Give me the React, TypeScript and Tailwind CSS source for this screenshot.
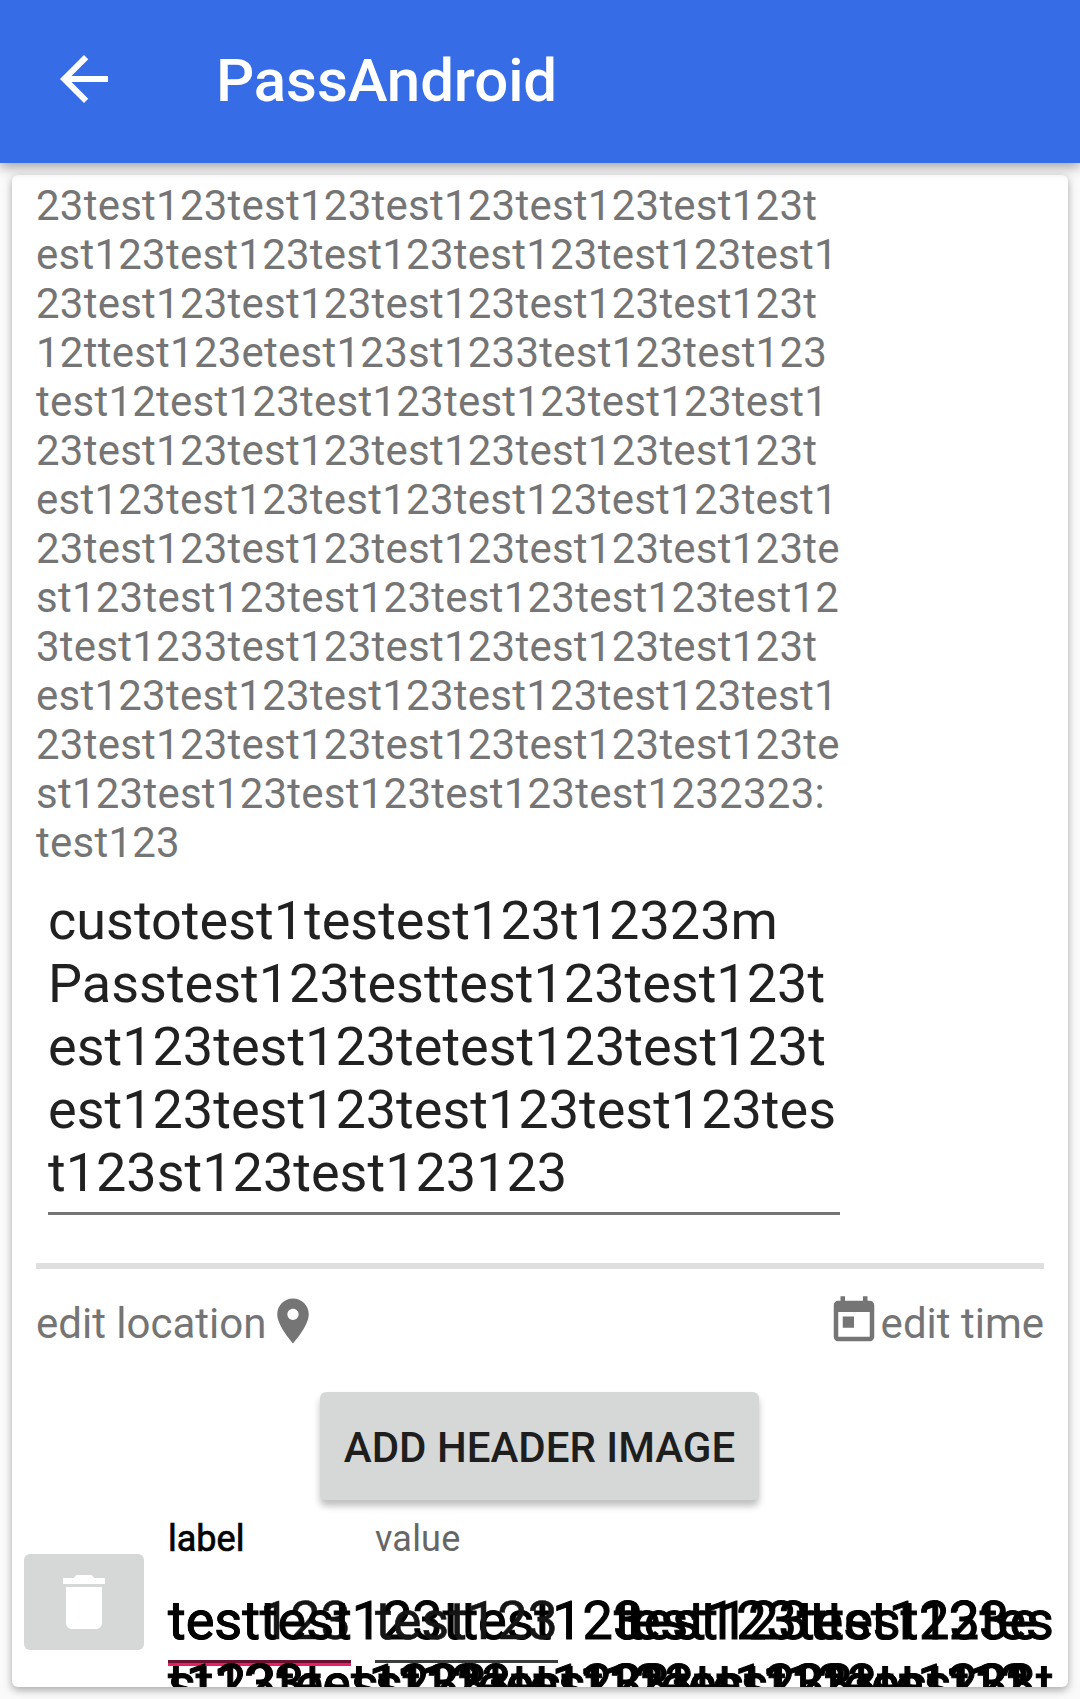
import React from "react";

const description = [
  "23test123test123test123test123test123t",
  "est123test123test123test123test123test1",
  "23test123test123test123test123test123t",
  "12ttest123etest123st1233test123test123",
  "test12test123test123test123test123test1",
  "23test123test123test123test123test123t",
  "est123test123test123test123test123test1",
  "23test123test123test123test123test123te",
  "st123test123test123test123test123test12",
  "3test1233test123test123test123test123t",
  "est123test123test123test123test123test1",
  "23test123test123test123test123test123te",
  "st123test123test123test123test1232323:",
  "test123",
];

const passName = [
  "custotest1testest123t12323m",
  "Passtest123testtest123test123t",
  "est123test123tetest123test123t",
  "est123test123test123test123tes",
  "t123st123test123123",
];

/* Field contents that spill out of their boxes and pile up over each other. */
const overflow = [
  { x: 0, y: 0, text: "test123", tone: "soft" },
  { x: 0, y: 0, text: "testtest123ttest123", tone: "hard" },
  { x: 207, y: 0, text: "test123", tone: "soft" },
  { x: 458, y: 0, text: "test123ttest123e", tone: "hard" },
  { x: 446, y: 0, text: "test123test123tes", tone: "hard" },
  { x: 0, y: 63, text: "t123test123test123test123test123t", tone: "hard" },
  { x: 0, y: 63, text: "st123test123test123test123test123t", tone: "hard" },
  { x: 207, y: 63, text: "st123test123test123test12", tone: "hard" },
];

function Icon({ d, className }: { d: string; className: string }) {
  return (
    <svg viewBox="0 0 24 24" fill="currentColor" className={className}>
      <path d={d} />
    </svg>
  );
}

export default function App() {
  return (
    <div className="flex h-[1699px] w-[1080px] flex-col overflow-hidden bg-[#fafafa] font-[Roboto,sans-serif]">
      <header className="relative z-10 flex h-[163px] shrink-0 items-center bg-[#366de7] pb-[5px] pl-12 text-white shadow-[0_4px_12px_rgba(0,0,0,0.36)]">
        <Icon
          className="size-[72px]"
          d="M20 11H7.83l5.59-5.59L12 4l-8 8 8 8 1.41-1.41L7.83 13H20v-2z"
        />
        <h1 className="ml-24 pt-[4px] text-[60px] leading-[70px] font-medium tracking-[-0.1px]">
          PassAndroid
        </h1>
      </header>

      <main className="mx-3 mt-3 flex h-[1512px] flex-col overflow-hidden rounded-[6px] bg-white shadow-[0_3px_8px_rgba(0,0,0,0.34)]">
        <section className="px-6 pt-[6px]">
          <div className="text-[42px] leading-[49px] tracking-[0.24px] whitespace-nowrap text-[#757575]">
            {description.map((line, i) => (
              <div key={i}>{line}</div>
            ))}
          </div>
          <div className="mt-[22px] ml-3 w-[792px] border-b-[3px] border-[#757575] pb-2 text-[54px] leading-[63px] whitespace-nowrap text-[#212121]">
            {passName.map((line, i) => (
              <div key={i}>{line}</div>
            ))}
          </div>
          <hr className="mt-12 h-[6px] border-0 bg-[#dfdfdf]" />
          <div className="mt-[25px] flex h-[54px] justify-between text-[42px] leading-[49px] text-[#757575]">
            <div className="flex">
              <span className="pt-[5px]">edit location</span>
              <Icon
                className="size-[54px]"
                d="M12 2C8.13 2 5 5.13 5 9c0 5.25 7 13 7 13s7-7.75 7-13c0-3.87-3.13-7-7-7zm0 9.5c-1.38 0-2.5-1.12-2.5-2.5s1.12-2.5 2.5-2.5 2.5 1.12 2.5 2.5-1.12 2.5-2.5 2.5z"
              />
            </div>
            <div className="flex">
              <Icon
                className="size-[54px]"
                d="M19 3h-1V1h-2v2H8V1H6v2H5c-1.11 0-1.99.9-1.99 2L3 19c0 1.1.89 2 2 2h14c1.1 0 2-.9 2-2V5c0-1.1-.9-2-2-2zm0 16H5V8h14v11zM7 10h5v5H7z"
              />
              <span className="pt-[5px]">edit time</span>
            </div>
          </div>
        </section>

        <button className="mt-11 ml-[308px] h-[108px] w-[439px] shrink-0 rounded-[6px] bg-[#d6d8d7] pt-[2px] text-[42px] leading-[49px] font-medium whitespace-nowrap text-[#1e1e1e] shadow-[0_6px_7px_rgba(0,0,0,0.25)]">
          ADD HEADER IMAGE
        </button>

        <section className="flex pt-[18px] pl-3">
          <button className="mt-9 flex h-24 w-[120px] shrink-0 items-center justify-center rounded-[6px] bg-[#d6d8d7] text-white">
            <Icon
              className="size-[72px]"
              d="M6 19c0 1.1.9 2 2 2h8c1.1 0 2-.9 2-2V7H6v12zM19 4h-3.5l-1-1h-5l-1 1H5v2h14V4z"
            />
          </button>
          <div className="ml-6 w-[890px] shrink-0">
            <div className="flex text-[36px] leading-[42px]">
              <span className="w-[207px] text-black [-webkit-text-stroke:0.7px_black]">label</span>
              <span className="tracking-[0.2px] text-[#666666]">value</span>
            </div>
            <div className="relative mt-[29px] h-[71px]">
              <div className="flex gap-6 pt-[71px]">
                <div className="h-[6px] w-[183px] border-t-[3px] border-[#6a0f2e] bg-[#e91e63]" />
                <div className="h-[3px] w-[183px] bg-[#3b3d3c]" />
              </div>
              {overflow.map((layer, i) => (
                <span
                  key={i}
                  className={
                    layer.tone === "soft"
                      ? "absolute text-[54px] leading-[63px] whitespace-nowrap text-[#151515] [-webkit-text-stroke:0.6px_#151515]"
                      : "absolute text-[54px] leading-[63px] whitespace-nowrap text-black [-webkit-text-stroke:1px_black]"
                  }
                  style={{ left: layer.x, top: layer.y }}
                >
                  {layer.text}
                </span>
              ))}
            </div>
          </div>
        </section>
      </main>
    </div>
  );
}
